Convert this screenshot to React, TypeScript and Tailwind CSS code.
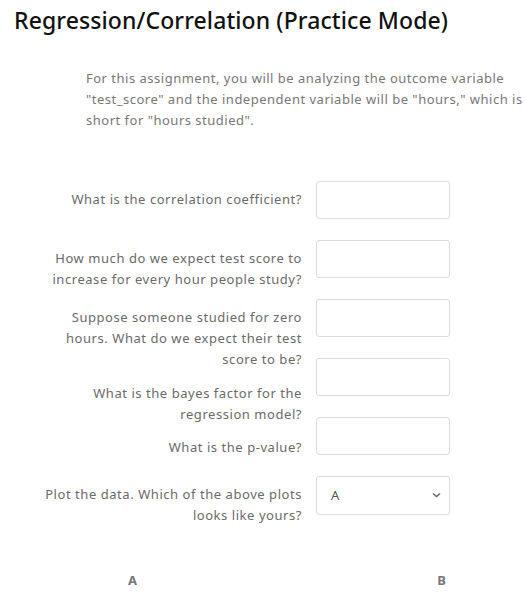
import React from "react";

const font = { fontFamily: '"Noto Sans", "Open Sans", sans-serif' };

type Q = { label: string[]; pad: string };

const questions: Q[] = [
  { label: ["What is the correlation coefficient?"], pad: "pt-[8px]" },
  { label: ["How much do we expect test score to", "increase for every hour people study?"], pad: "pt-[8px]" },
  { label: ["Suppose someone studied for zero", "hours. What do we expect their test", "score to be?"], pad: "pt-[8px]" },
  { label: ["What is the bayes factor for the", "regression model?"], pad: "pt-[25px]" },
  { label: ["What is the p-value?"], pad: "pt-[20px]" },
];

function Label({ lines, pad }: { lines: string[]; pad: string }) {
  return (
    <div className={`w-[302px] shrink-0 text-right text-[13px] leading-[21px] tracking-[0.55px] text-[#6a6a6a] ${pad}`}>
      {lines.map((l) => (
        <div key={l} className="whitespace-nowrap">
          {l}
        </div>
      ))}
    </div>
  );
}

export default function App() {
  return (
    <div className="w-[526px] h-[607px] overflow-hidden bg-white" style={font}>
      <h1 className="pl-[14px] pt-[4px] text-[23px] leading-[32px] font-medium tracking-[0.1px] text-[#111] whitespace-nowrap">
        Regression/Correlation (Practice Mode)
      </h1>

      <div className="mt-[32px] pl-[86px] text-[13px] leading-[21px] tracking-[0.5px] text-[#777]">
        <div className="whitespace-nowrap">For this assignment, you will be analyzing the outcome variable</div>
        <div className="whitespace-nowrap">"test_score" and the independent variable will be "hours," which is</div>
        <div className="whitespace-nowrap">short for "hours studied".</div>
      </div>

      <div className="mt-[50px] flex flex-col">
        {questions.map((q, i) => (
          <div key={i} className="flex h-[59px]">
            <Label lines={q.label} pad={q.pad} />
            <input
              type="text"
              className="ml-[14px] h-[38px] w-[134px] rounded-[3px] border border-[#dcdcdc] bg-white outline-none"
            />
          </div>
        ))}
        <div className="flex h-[59px]">
          <Label lines={["Plot the data. Which of the above plots", "looks like yours?"]} pad="pt-[8px]" />
          <div className="relative ml-[14px] flex h-[39px] w-[134px] items-center rounded-[3px] border border-[#dcdcdc] bg-white pl-[14px] text-[13px] text-[#555]">
            <span>A</span>
            <svg
              className="absolute right-[8px] top-[15px]"
              width="9"
              height="6"
              viewBox="0 0 9 6"
              fill="none"
              stroke="#666"
              strokeWidth="1.5"
            >
              <path d="M1 1.5 L4.5 4.5 L8 1.5" />
            </svg>
          </div>
        </div>
      </div>

      <div className="mt-[36px] flex justify-between pl-[128px] pr-[80px] text-[13px] font-bold text-[#777]">
        <span>A</span>
        <span>B</span>
      </div>
    </div>
  );
}
